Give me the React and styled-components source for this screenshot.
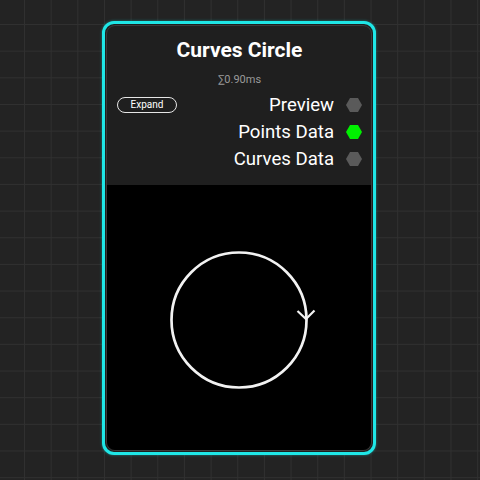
import styled, { createGlobalStyle } from 'styled-components';

const Global = createGlobalStyle`
    html, body {
        margin: 0;
        padding: 0;
        height: 100%;
    }
    body {
        background-color: #232323;
        background-image:
            linear-gradient(#303030 1px, transparent 1px),
            linear-gradient(90deg, #303030 1px, transparent 1px);
        background-size: 26.667px 26.667px;
        background-position: 24px 24px;
        font-family: Roboto, "Noto Sans", sans-serif;
    }
`

const Page = styled.div`
    width: 480px;
    height: 480px;
    box-sizing: border-box;
    padding: 21px 0 0 102px;
`

const Node = styled.div`
    box-sizing: border-box;
    width: 274px;
    height: 434px;
    border: 3px solid #1fe6e6;
    border-radius: 12px;
    padding: 1px;
    background: #1e1e1e;
    box-shadow: 0 0 3px rgba(31, 230, 230, 0.45);
`

const Inner = styled.div`
    box-sizing: border-box;
    height: 100%;
    border: 1px solid #3b3b3b;
    border-radius: 9px;
    overflow: hidden;
    display: flex;
    flex-direction: column;
    background: #1f1f1f;
`

const Header = styled.div`
    padding: 12px 9px 13px 10px;
    display: flex;
    flex-direction: column;
`

const Title = styled.div`
    font-size: 21px;
    line-height: 25px;
    font-weight: 700;
    color: #fff;
    text-align: center;
`

const Timing = styled.div`
    margin-top: 10px;
    font-size: 11px;
    line-height: 14px;
    color: #9a9a9a;
    text-align: center;
`

const Body = styled.div`
    margin-top: 4px;
    display: flex;
    justify-content: space-between;
    align-items: flex-start;
`

const ExpandButton = styled.button`
    box-sizing: border-box;
    margin-top: 6px;
    width: 60px;
    height: 16px;
    padding: 0;
    border: 1.5px solid #e6e6e6;
    border-radius: 8px;
    background: transparent;
    color: #fff;
    font-family: Roboto, sans-serif;
    font-size: 10px;
    line-height: 12px;
`

const Outputs = styled.div`
    display: flex;
    flex-direction: column;
`

const Output = styled.div`
    display: flex;
    align-items: center;
    justify-content: flex-end;
    gap: 12px;
    height: 27px;
    font-size: 18.6px;
    color: #fff;
`

const Socket = ({ on }) => (
    <svg width="16" height="14" viewBox="0 0 16 14">
        <polygon points="4,0 12,0 16,7 12,14 4,14 0,7" fill={on ? '#00f000' : '#5a5a5a'} />
    </svg>
)

const Preview = styled.div`
    flex: 1;
    background: #000;
    display: flex;
    align-items: center;
    justify-content: center;
`

const outputs = [
    { name: 'Preview', on: false },
    { name: 'Points Data', on: true },
    { name: 'Curves Data', on: false },
]

const App = () => {
    return (
        <Page>
            <Global />
            <Node>
                <Inner>
                    <Header>
                        <Title>Curves Circle</Title>
                        <Timing>∑0.90ms</Timing>
                        <Body>
                            <ExpandButton>Expand</ExpandButton>
                            <Outputs>
                                {outputs.map(o => (
                                    <Output key={o.name}>
                                        {o.name}
                                        <Socket on={o.on} />
                                    </Output>
                                ))}
                            </Outputs>
                        </Body>
                    </Header>
                    <Preview>
                        <svg width="160" height="160" viewBox="-80 -82 160 160">
                            <circle cx="0" cy="0" r="67.5" fill="none" stroke="#f2f2f2" strokeWidth="2.7" />
                            <polyline points="-8.5,-8 0,0 8.5,-8.5" fill="none" stroke="#f2f2f2" strokeWidth="2.2" transform="translate(67,-1)" />
                        </svg>
                    </Preview>
                </Inner>
            </Node>
        </Page>
    );
}

export default App;
